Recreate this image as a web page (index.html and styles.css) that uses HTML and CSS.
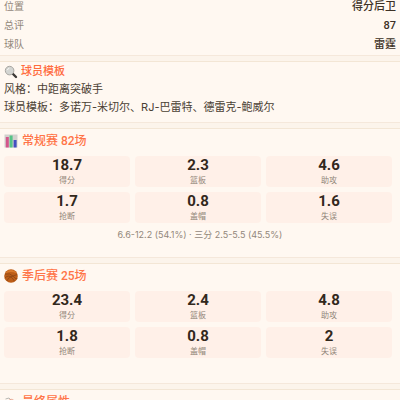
FILE: index.html
```html
<!DOCTYPE html>
<html lang="zh-CN">
<head>
<meta charset="utf-8">
<meta name="viewport" content="width=device-width, initial-scale=1">
<title>球员资料</title>
<link rel="stylesheet" href="styles.css">
</head>
<body>
<main class="page">
  <section class="card info">
    <dl class="rows">
      <div class="row"><dt>位置</dt><dd>得分后卫</dd></div>
      <div class="row"><dt>总评</dt><dd>87</dd></div>
      <div class="row"><dt>球队</dt><dd>雷霆</dd></div>
    </dl>
  </section>

  <section class="card template">
    <h2 class="title small">
      <svg class="icon" viewBox="0 0 14 14" aria-hidden="true">
        <path d="M8.5 8.5 12 12" stroke="#3c3936" stroke-width="2.4" stroke-linecap="round"/>
        <circle cx="5.6" cy="5.6" r="4.3" fill="#d3d5d2" stroke="#a9a7a2" stroke-width="1"/>
        <path d="M3.3 5.2a2.5 2.5 0 0 1 2-1.9" fill="none" stroke="#f7f7f4" stroke-width="1"/>
      </svg>
      球员模板
    </h2>
    <p>风格：中距离突破手</p>
    <p>球员模板：多诺万-米切尔、RJ-巴雷特、德雷克-鲍威尔</p>
  </section>

  <section class="card season">
    <h2 class="title">
      <svg class="icon" viewBox="0 0 14 14" aria-hidden="true">
        <rect x="0.5" y="0.5" width="13" height="13" fill="#d2d0cd"/>
        <rect x="1.8" y="3" width="3" height="10.5" fill="#d3568b"/>
        <rect x="5.6" y="1.5" width="3" height="12" fill="#55c486"/>
        <rect x="9.6" y="6" width="3" height="7.5" fill="#4250c0"/>
      </svg>
      常规赛 82场
    </h2>
    <div class="stats">
      <div class="stat"><strong>18.7</strong><span>得分</span></div>
      <div class="stat"><strong>2.3</strong><span>篮板</span></div>
      <div class="stat"><strong>4.6</strong><span>助攻</span></div>
      <div class="stat"><strong>1.7</strong><span>抢断</span></div>
      <div class="stat"><strong>0.8</strong><span>盖帽</span></div>
      <div class="stat"><strong>1.6</strong><span>失误</span></div>
    </div>
    <p class="shooting">6.6-12.2 (54.1%) · 三分 2.5-5.5 (45.5%)</p>
  </section>

  <section class="card season playoffs">
    <h2 class="title">
      <svg class="icon" viewBox="0 0 14 14" aria-hidden="true">
        <circle cx="7" cy="7" r="6.8" fill="#bd5d16"/>
        <path d="M1.5 4.4A6.2 6.2 0 0 1 12.6 4.5Q7 1.8 1.5 4.4Z" fill="#d9792b"/>
        <path d="M1 5.2Q6 3.5 9.5 7.5T13 9M.8 9Q4.5 5.5 7.5 8.5T10.5 12.3M3 12Q3.5 8.8 8 7.3T13.3 5.5" fill="none" stroke="#7a3c12" stroke-width=".6"/>
      </svg>
      季后赛 25场
    </h2>
    <div class="stats">
      <div class="stat"><strong>23.4</strong><span>得分</span></div>
      <div class="stat"><strong>2.4</strong><span>篮板</span></div>
      <div class="stat"><strong>4.8</strong><span>助攻</span></div>
      <div class="stat"><strong>1.8</strong><span>抢断</span></div>
      <div class="stat"><strong>0.8</strong><span>盖帽</span></div>
      <div class="stat"><strong>2</strong><span>失误</span></div>
    </div>
  </section>

  <section class="card season">
    <h2 class="title">
      <svg class="icon" viewBox="0 0 14 14" aria-hidden="true">
        <path d="M1.5 4 5 3 8 6" fill="none" stroke="#b9b8b3" stroke-width="1"/>
        <path d="M5 4.5Q9 2 11 7L12 12H4Z" fill="#ecb9a6"/>
        <path d="M6 5 9 7" stroke="#c9695a" stroke-width="1.2"/>
      </svg>
      最终属性
    </h2>
  </section>
</main>
</body>
</html>
```
FILE: styles.css
```css
* {
  box-sizing: border-box;
}

body {
  margin: 0;
  height: 100vh;
  overflow: hidden;
  background: #fcf4eb;
  color: #4a4033;
  font-family: Inter, "Noto Sans CJK SC", sans-serif;
  font-size: 11px;
}

h2,
p,
dl,
dd {
  margin: 0;
}

.page {
  display: flex;
  flex-direction: column;
  gap: 5px;
  margin-top: -3px;
}

.card {
  flex: none;
  padding: 0 8px 0 4px;
  background: #fff8f1;
  border-top: 1px solid #f3e6d5;
  border-bottom: 1px solid #f5e8db;
}

.info {
  padding-right: 4px;
  padding-bottom: 1px;
  border-top: 0;
}

.row {
  display: flex;
  justify-content: space-between;
  line-height: 19px;
}

.row dt {
  color: #92877a;
  font-size: 10px;
}

.row dd {
  color: #3d3125;
  font-family: Roboto, "Noto Sans CJK SC", sans-serif;
  font-weight: 500;
  padding-top: 1px;
  line-height: 18px;
}

.title {
  display: flex;
  align-items: center;
  gap: 4px;
  color: #ff7447;
  font-family: Roboto, "Noto Sans CJK SC", sans-serif;
  font-size: 12px;
  font-weight: 500;
  line-height: 18px;
}

.title.small {
  gap: 3px;
  font-size: 11px;
  line-height: 16px;
  color: #ff6b3d;
}

.icon {
  flex: none;
  width: 14px;
  height: 14px;
}

.template {
  padding-top: 2px;
  padding-bottom: 6px;
}

.template p {
  line-height: 18px;
}

.season {
  padding-top: 3px;
  padding-bottom: 15px;
}

.playoffs {
  padding-bottom: 25px;
}

.stats {
  display: grid;
  grid-template-columns: repeat(3, 1fr);
  gap: 5px;
  margin-top: 6px;
}

.stat {
  display: flex;
  flex-direction: column;
  align-items: center;
  min-height: 31px;
  background: #fff0e8;
  border-radius: 4px;
}

.stat strong {
  color: #32281c;
  font-family: Roboto, sans-serif;
  font-size: 15px;
  font-weight: 700;
  line-height: 18px;
}

.stat span {
  color: #92877a;
  font-size: 8px;
  line-height: 12px;
}

.shooting {
  margin: 5px -4px 0 0;
  color: #92877a;
  font-size: 9px;
  line-height: 14px;
  text-align: center;
}
```
